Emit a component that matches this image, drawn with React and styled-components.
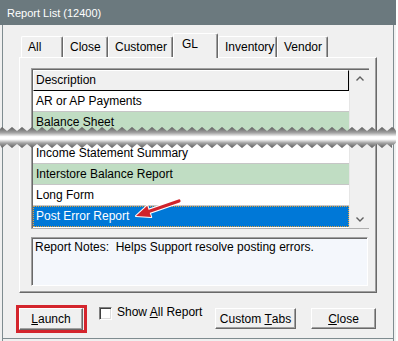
import React from 'react'
import styled, { createGlobalStyle } from 'styled-components'

const GlobalStyle = createGlobalStyle`
  html, body {
    margin: 0;
    padding: 0;
    background: #fff;
  }
  body {
    font-family: "Liberation Sans", Arial, sans-serif;
    font-size: 12px;
    color: #000;
  }
`

const Window = styled.div`
  position: relative;
  width: 396px;
  height: 341px;
  overflow: hidden;
  display: flex;
  flex-direction: column;
`
const TitleBar = styled.div`
  flex: none;
  height: 25px;
  display: flex;
  align-items: center;
  padding-left: 7px;
  background: #6b797e;
  color: #fff;
  font-size: 11px;
`
const Body = styled.div`
  flex: 1;
  background: #f0f0f0;
  padding: 8px 0 0 19px;
  box-shadow:
    inset 2px 0 #f0f0f0, inset 3px 0 #7f8c90,
    inset -2px 0 #f0f0f0, inset -3px 0 #7f8c90,
    inset 0 -2px #f0f0f0, inset 0 -3px #7f8c90;
`
const TabStrip = styled.div`
  position: relative;
  z-index: 1;
  display: flex;
  align-items: flex-end;
  height: 24px;
  margin-left: 2px;
`
const Tab = styled.div`
  box-sizing: border-box;
  width: ${p => p.w}px;
  height: ${p => (p.active ? 25 : 21)}px;
  margin-bottom: ${p => (p.active ? -1 : 0)}px;
  padding: 3px 0 0 ${p => (p.active ? 8 : 6)}px;
  background: #f0f0f0;
  border-top: 1px solid #fff;
  border-left: 1px solid #fff;
  border-right: 1px solid #696969;
  box-shadow: inset -1px 0 #a0a0a0;
  border-radius: 2px 2px 0 0;
  line-height: 15px;
`
const Panel = styled.div`
  box-sizing: border-box;
  width: 358px;
  height: 236px;
  padding: 10px 0 0 11px;
  display: flex;
  flex-direction: column;
  gap: 8px;
  border: 1px solid;
  border-color: #fff #696969 #696969 #fff;
  box-shadow: inset -1px -1px #a0a0a0;
`
const ListBox = styled.div`
  box-sizing: border-box;
  width: 338px;
  height: 161px;
  display: flex;
  border: 1px solid;
  border-color: #a0a0a0 #a8a8a8 #b0b0b0 #a0a0a0;
  background: #fff;
`
const ListInner = styled.div`
  flex: 1;
  display: flex;
  border-top: 1px solid #696969;
  border-left: 1px solid #696969;
`
const Columns = styled.div`
  width: 316px;
  background: #fff;
`
const Header = styled.div`
  box-sizing: border-box;
  height: 21px;
  padding-left: 2px;
  line-height: 19px;
  background: #f0f0f0;
  border: 1px solid;
  border-color: #fff #000 #000 #fff;
`
const rowBg = { plain: '#fff', green: '#c0ddc3', picked: '#0078d7' }

const Row = styled.div`
  box-sizing: border-box;
  height: 21px;
  padding-left: 3px;
  line-height: 20px;
  white-space: nowrap;
  background: ${p => rowBg[p.tone]};
  color: ${p => (p.tone === 'picked' ? '#fff' : '#000')};
  border-bottom: 1px solid ${p => (p.tone === 'picked' ? '#0078d7' : '#c6c6c6')};
  outline: ${p => (p.tone === 'picked' ? '1px dotted #e3a13c' : 'none')};
  outline-offset: -1px;
`
const Gap = styled.div`
  height: 10px;
`
const Scrollbar = styled.div`
  width: 19px;
  display: flex;
  flex-direction: column;
  justify-content: space-between;
  background: #f0f0f0;
  border-left: 1px solid #e6e6e6;
`
const ScrollButton = styled.div`
  height: 17px;
  display: flex;
  align-items: center;
  justify-content: center;
`
const Notes = styled.div`
  box-sizing: border-box;
  width: 337px;
  height: 49px;
  padding: 2px 0 0 3px;
  line-height: 15px;
  white-space: pre;
  background: #f4f7fc;
  border: 1px solid;
  border-color: #a0a0a0 #fff #fff #a0a0a0;
  box-shadow: inset 1px 1px #696969;
`
const ButtonRow = styled.div`
  display: flex;
  align-items: flex-start;
  margin: 12px 0 0 -3px;
`
const Highlight = styled.div`
  display: flex;
  padding: 0 1px 0 0;
  border: 3px solid #d4252d;
`
const Button = styled.div`
  box-sizing: border-box;
  width: ${p => p.w}px;
  height: ${p => p.h || 21}px;
  margin: ${p => p.m || '0'};
  display: flex;
  align-items: center;
  justify-content: center;
  background: #f0f0f0;
  border: 1px solid;
  border-color: #fff #696969 #696969 #fff;
  box-shadow: inset -1px -1px #a0a0a0;
  white-space: pre;
`
const CheckGroup = styled.label`
  width: 116px;
  margin: 2px 0 0 12px;
  display: flex;
  align-items: flex-start;
  gap: 5px;
`
const CheckBox = styled.span`
  box-sizing: border-box;
  width: 13px;
  height: 13px;
  background: #fff;
  border: 1px solid;
  border-color: #808080 #fff #fff #808080;
  box-shadow: inset 1px 1px #404040, inset -1px -1px #dcdcdc;
`
const CheckText = styled.span`
  line-height: 11px;
  white-space: nowrap;
`
const Tear = styled.svg`
  position: absolute;
  left: 0;
  top: 126px;
`
const Pointer = styled.svg`
  position: absolute;
  left: 130px;
  top: 195px;
`

const tabs = [
  { label: 'All', w: 42 },
  { label: 'Close', w: 45 },
  { label: 'Customer', w: 65 },
  { label: 'GL', w: 45, active: true },
  { label: 'Inventory', w: 59 },
  { label: 'Vendor', w: 51 }
]

// zig-zag band for the "torn" list
const tearPath = () => {
  let d = 'M-6 11 Q-6 3 0 3 '
  for (let i = 0; i <= 78; i++) d += `L${2 + i * 5} ${i % 2 ? 5 : 1} `
  d += 'Q397 3 397 11 Q397 19 392 19 '
  for (let i = 78; i >= 0; i--) d += `L${2 + i * 5} ${i % 2 ? 18 : 22} `
  d += 'L0 19 Q-6 19 -6 11 Z'
  return d
}

const Chevron = ({ up }) => (
  <svg width="8" height="5" viewBox="0 0 8 5">
    <polyline
      points={up ? '0.5,4.5 4,1 7.5,4.5' : '0.5,0.5 4,4 7.5,0.5'}
      fill="none"
      stroke="#606060"
      strokeWidth="1.4"
    />
  </svg>
)

export default function App() {
  return (
    <Window>
      <GlobalStyle />
      <TitleBar>Report List (12400)</TitleBar>
      <Body>
        <TabStrip>
          {tabs.map(t => (
            <Tab key={t.label} w={t.w} active={t.active}>{t.label}</Tab>
          ))}
        </TabStrip>
        <Panel>
          <ListBox>
            <ListInner>
              <Columns>
                <Header>Description</Header>
                <Row tone="plain">AR or AP Payments</Row>
                <Row tone="green">Balance Sheet</Row>
                <Gap />
                <Row tone="plain">Income Statement Summary</Row>
                <Row tone="green">Interstore Balance Report</Row>
                <Row tone="plain">Long Form</Row>
                <Row tone="picked">Post Error Report</Row>
              </Columns>
              <Scrollbar>
                <ScrollButton><Chevron up /></ScrollButton>
                <ScrollButton><Chevron /></ScrollButton>
              </Scrollbar>
            </ListInner>
          </ListBox>
          <Notes>Report Notes:  Helps Support resolve posting errors.</Notes>
        </Panel>
        <ButtonRow>
          <Highlight>
            <Button w={64} h={22}><u>L</u>aunch</Button>
          </Highlight>
          <CheckGroup>
            <CheckBox />
            <CheckText>Show <u>A</u>ll Report</CheckText>
          </CheckGroup>
          <Button w={81} m="3px 0 0 0">Custom <u>T</u>abs</Button>
          <Button w={65} m="3px 0 0 15px"><u>C</u>lose</Button>
        </ButtonRow>
      </Body>

      <Tear width="396" height="23" viewBox="0 0 396 23">
        <defs>
          <linearGradient id="tearFade" x1="0" y1="0" x2="0" y2="1">
            <stop offset="0" stopColor="#5c5c5c" />
            <stop offset="0.28" stopColor="#a4a4a4" />
            <stop offset="0.46" stopColor="#ffffff" />
            <stop offset="0.58" stopColor="#ffffff" />
            <stop offset="0.76" stopColor="#a4a4a4" />
            <stop offset="1" stopColor="#5c5c5c" />
          </linearGradient>
        </defs>
        <path d={tearPath()} fill="url(#tearFade)" />
      </Tear>

      <Pointer width="60" height="30" viewBox="0 0 60 30">
        <line x1="49" y1="6" x2="19" y2="16.4" stroke="#fff" strokeWidth="5.5" strokeLinecap="round" />
        <polygon points="6,21 21.2,22.1 17.2,10.7" fill="#fff" stroke="#fff" strokeWidth="2" strokeLinejoin="round" />
        <line x1="49" y1="6" x2="18" y2="16.7" stroke="#d0232b" strokeWidth="3.2" strokeLinecap="round" />
        <polygon points="6,21 21.2,22.1 17.2,10.7" fill="#d0232b" />
      </Pointer>
    </Window>
  )
}
